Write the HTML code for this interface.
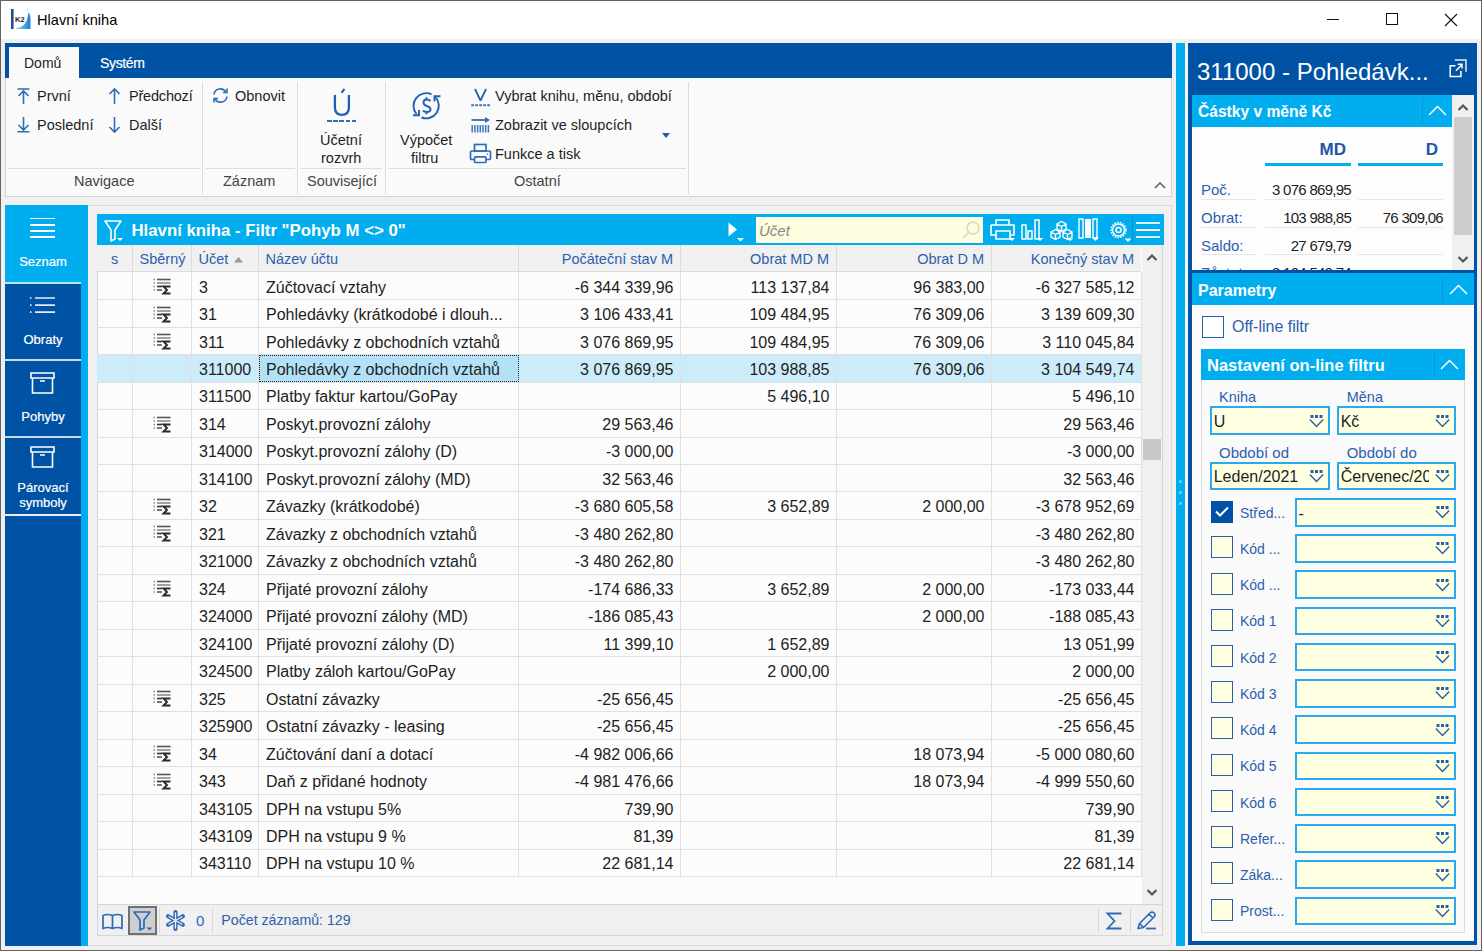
<!DOCTYPE html>
<html><head><meta charset="utf-8">
<style>
*{box-sizing:border-box;margin:0;padding:0}
html,body{width:1482px;height:951px;overflow:hidden}
body{position:relative;background:#f0f0f0;font-family:"Liberation Sans",sans-serif;color:#1e1e1e}
.a{position:absolute}
.t{position:absolute;white-space:nowrap;line-height:1}
svg{position:absolute;overflow:visible}
</style></head><body>
<!-- window frame -->
<div class="a" style="left:0;top:0;width:1482px;height:951px;border:1px solid #646464"></div>
<!-- title bar -->
<div class="a" style="left:1px;top:1px;width:1480px;height:38px;background:#fff"></div>
<svg style="left:10px;top:8px" width="22" height="22" viewBox="0 0 22 22"><defs><linearGradient id="g1" x1="0" y1="0" x2="1" y2="0"><stop offset="0" stop-color="#7fe3e6"/><stop offset="1" stop-color="#1f7ae0"/></linearGradient></defs><rect x="1" y="1" width="2.6" height="20" fill="#1f4e9c"/><path d="M6 20Q13 20 16.5 13Q18 9 18.5 4Q20.5 7 20.5 12V21H6Z" fill="url(#g1)"/><path d="M16 3L18 1" stroke="#9fd0f5" stroke-width="1"/><text x="5" y="13.5" font-family="Liberation Sans" font-weight="700" font-size="7.5" fill="#222">K2</text></svg>
<div class="t" style="left:37px;top:13px;font-size:14.6px;color:#000">Hlavní kniha</div>
<!-- window buttons -->
<div class="a" style="left:1327px;top:19px;width:12px;height:1px;background:#111"></div>
<div class="a" style="left:1386px;top:13px;width:12px;height:12px;border:1px solid #111"></div>
<svg style="left:1445px;top:14px" width="12" height="12"><path d="M0 0L12 12M12 0L0 12" stroke="#111" stroke-width="1.1"/></svg>


<!-- ribbon -->
<div class="a" style="left:5px;top:43px;width:1167px;height:35px;background:#0052a5"></div>
<div class="a" style="left:8.5px;top:46.5px;width:70px;height:31.5px;background:#fafafa"></div>
<div class="t" style="left:24px;top:55.5px;font-size:14px;color:#1e1e1e">Domů</div>
<div class="t" style="left:100px;top:55.5px;font-size:14px;color:#fff;letter-spacing:-0.35px;-webkit-text-stroke:0.2px #fff">Systém</div>
<div class="a" style="left:5px;top:78px;width:1167px;height:119px;background:#fafafa;border:1px solid #d4d4d4;border-top:none"></div>
<!-- group separators (horizontal) -->
<div class="a" style="left:8px;top:168px;width:192px;height:1px;background:#dcdcdc"></div>
<div class="a" style="left:206px;top:168px;width:89px;height:1px;background:#dcdcdc"></div>
<div class="a" style="left:301px;top:168px;width:81px;height:1px;background:#dcdcdc"></div>
<div class="a" style="left:389px;top:168px;width:297px;height:1px;background:#dcdcdc"></div>
<!-- group dividers -->
<div class="a" style="left:202px;top:82px;width:1px;height:112px;background:#dcdcdc"></div>
<div class="a" style="left:297px;top:82px;width:1px;height:112px;background:#dcdcdc"></div>
<div class="a" style="left:385px;top:82px;width:1px;height:112px;background:#dcdcdc"></div>
<div class="a" style="left:688px;top:82px;width:1px;height:112px;background:#dcdcdc"></div>
<!-- group labels -->
<div class="t" style="left:74px;top:174px;font-size:14.5px;color:#444">Navigace</div>
<div class="t" style="left:223px;top:174px;font-size:14.5px;color:#444">Záznam</div>
<div class="t" style="left:307px;top:174px;font-size:14.5px;color:#444">Související</div>
<div class="t" style="left:514px;top:174px;font-size:14.5px;color:#444">Ostatní</div>
<!-- nav buttons -->
<svg style="left:17px;top:88px" width="13" height="16" viewBox="0 0 13 16"><path d="M0.5 1H12.5M6.5 2.5V16M1.5 8L6.5 3L11.5 8" stroke="#2f6db5" stroke-width="1.6" fill="none"/></svg>
<div class="t" style="left:37px;top:89px;font-size:14.5px">První</div>
<svg style="left:17px;top:117px" width="13" height="16" viewBox="0 0 13 16"><path d="M0.5 14.8H12.5M6.5 0V13.5M1.5 8L6.5 13L11.5 8" stroke="#2f6db5" stroke-width="1.6" fill="none"/></svg>
<div class="t" style="left:37px;top:118px;font-size:14.5px">Poslední</div>
<svg style="left:108px;top:88px" width="13" height="16" viewBox="0 0 13 16"><path d="M6.5 1V16M1.5 6L6.5 1L11.5 6" stroke="#2f6db5" stroke-width="1.6" fill="none"/></svg>
<div class="t" style="left:129px;top:89px;font-size:14.5px;letter-spacing:-0.2px">Předchozí</div>
<svg style="left:108px;top:117px" width="13" height="16" viewBox="0 0 13 16"><path d="M6.5 0V15M1.5 10L6.5 15L11.5 10" stroke="#2f6db5" stroke-width="1.6" fill="none"/></svg>
<div class="t" style="left:129px;top:118px;font-size:14.5px">Další</div>
<!-- obnovit -->
<svg style="left:212px;top:87px" width="17" height="17" viewBox="0 0 17 17"><path d="M2 7.5A6.5 6.5 0 0 1 14 5M15 9.5A6.5 6.5 0 0 1 3 12" stroke="#2f6db5" stroke-width="1.6" fill="none"/><path d="M11 5.5H15V1.5M6 11.5H2V15.5" stroke="#2f6db5" stroke-width="1.6" fill="none"/></svg>
<div class="t" style="left:235px;top:89px;font-size:14.5px">Obnovit</div>
<!-- ucetni rozvrh -->
<svg style="left:332px;top:88px" width="20" height="29" viewBox="0 0 20 29"><path d="M2.9 7V19.5Q2.9 26.8 9.9 26.8Q16.9 26.8 16.9 19.5V7" stroke="#1f5fb0" stroke-width="2.3" fill="none"/><path d="M9.5 4.8L12.5 0.8" stroke="#1f5fb0" stroke-width="2" fill="none"/></svg>
<div class="a" style="left:327px;top:120px;width:30px;height:2.2px;background:repeating-linear-gradient(90deg,#2f6db5 0 4.5px,transparent 4.5px 6.2px)"></div>
<div class="t" style="left:320px;top:133px;font-size:14.5px">Účetní</div>
<div class="t" style="left:321px;top:151px;font-size:14.5px">rozvrh</div>
<!-- vypocet filtru -->
<svg style="left:405px;top:85px" width="45" height="40" viewBox="0 0 45 40"><g stroke="#1f62b3" stroke-width="1.9" fill="none"><path d="M26.5 9.3A12.7 12.7 0 0 0 11.5 29"/><path d="M8 30.3H14V25"/><path d="M16.5 32.5A12.7 12.7 0 0 0 30.2 11.8"/><path d="M29.5 16.5V11.2H35.5"/><path d="M25.5 16Q24 14.5 21.8 14.5Q18.5 14.5 18.5 17.5Q18.5 20 21.8 21Q25.5 22 25.5 24.5Q25.5 27 21.8 27Q19 27 17.8 25.5M21.5 12.3V14.5M21.5 27V29.3"/></g></svg>
<div class="t" style="left:400px;top:133px;font-size:14.5px">Výpočet</div>
<div class="t" style="left:411px;top:151px;font-size:14.5px">filtru</div>
<!-- ostatni small buttons -->
<svg style="left:470px;top:88px" width="21" height="19" viewBox="0 0 21 19"><path d="M5 1L10.5 12.6L16 1" stroke="#1f5fb0" stroke-width="1.8" fill="none" stroke-linejoin="bevel"/><path d="M1.2 17.2H20.5" stroke="#3a78c0" stroke-width="2" stroke-dasharray="2.8 1.2"/></svg>
<div class="t" style="left:495px;top:89px;font-size:14.5px">Vybrat knihu, měnu, období</div>
<svg style="left:471px;top:116px" width="20" height="17" viewBox="0 0 20 17"><path d="M0.5 4H15" stroke="#2f6db5" stroke-width="1.8"/><path d="M14 1L19 4L14 7Z" fill="#2f6db5"/><path d="M1.2 9V16.5M3.9 9V16.5M6.6 9V16.5M9.3 9V16.5M12 9V16.5M14.7 9V16.5M17.4 9V16.5" stroke="#3a78c0" stroke-width="1.5"/></svg>
<div class="t" style="left:495px;top:118px;font-size:14.5px">Zobrazit ve sloupcích</div>
<svg style="left:469px;top:143px" width="23" height="21" viewBox="0 0 23 21"><g stroke="#2f6db5" stroke-width="1.7" fill="none"><rect x="5.5" y="1.5" width="11.5" height="6.5"/><path d="M5.5 16.5H2.8Q1.5 16.5 1.5 15.2V9.3Q1.5 8 2.8 8H20.2Q21.5 8 21.5 9.3V15.2Q21.5 16.5 20.2 16.5H17"/><rect x="5.5" y="13.8" width="11.5" height="5.7" rx="1"/></g><circle cx="18.5" cy="11" r="0.7" fill="#2f6db5"/></svg>
<div class="t" style="left:495px;top:147px;font-size:14.5px">Funkce a tisk</div>
<svg style="left:662px;top:133px" width="8" height="5"><path d="M0 0H8L4 5Z" fill="#1f5fb0"/></svg>
<!-- collapse ribbon caret -->
<svg style="left:1154px;top:182px" width="12" height="7"><path d="M1 6L6 1L11 6" stroke="#555" stroke-width="1.4" fill="none"/></svg>


<!-- sidebar -->
<div class="a" style="left:5px;top:205px;width:83px;height:741px;background:#00adef"></div>
<div class="a" style="left:5px;top:284px;width:76px;height:662px;background:#0052a5"></div>
<div class="a" style="left:5px;top:282px;width:76px;height:2px;background:#b9e6fa"></div>
<div class="a" style="left:5px;top:359px;width:76px;height:2px;background:#c8d8ee"></div>
<div class="a" style="left:5px;top:436px;width:76px;height:2px;background:#c8d8ee"></div>
<div class="a" style="left:5px;top:514px;width:76px;height:2px;background:#e8eef8"></div>
<!-- seznam icon -->
<div class="a" style="left:30px;top:217.6px;width:25px;height:1.7px;background:#fff"></div>
<div class="a" style="left:30px;top:224px;width:25px;height:1.7px;background:#fff"></div>
<div class="a" style="left:30px;top:230.2px;width:25px;height:1.7px;background:#fff"></div>
<div class="a" style="left:30px;top:236.4px;width:25px;height:1.7px;background:#fff"></div>
<div class="t" style="left:5px;width:76px;text-align:center;top:255px;font-size:13px;color:#fff;-webkit-text-stroke:0.2px #fff">Seznam</div>
<!-- obraty icon -->
<svg style="left:30px;top:297px" width="25" height="18" viewBox="0 0 25 18"><path d="M0 1H1.5M0 8.2H1.5M0 15.2H1.5" stroke="#e8eef8" stroke-width="1.7"/><path d="M5 1H25M5 8.2H25M5 15.2H25" stroke="#e3ebf6" stroke-width="1.7"/></svg>
<div class="t" style="left:5px;width:76px;text-align:center;top:332.5px;font-size:13px;color:#fff;-webkit-text-stroke:0.2px #fff">Obraty</div>
<!-- pohyby icon -->
<svg style="left:30px;top:372px" width="25" height="22" viewBox="0 0 25 22"><path d="M1 1H24V6H1ZM2.5 6V21H22.5V6M10 9H15" stroke="#fff" stroke-width="1.6" fill="none"/></svg>
<div class="t" style="left:5px;width:76px;text-align:center;top:410px;font-size:13px;color:#fff;-webkit-text-stroke:0.2px #fff">Pohyby</div>
<svg style="left:30px;top:446px" width="25" height="22" viewBox="0 0 25 22"><path d="M1 1H24V6H1ZM2.5 6V21H22.5V6M10 9H15" stroke="#fff" stroke-width="1.6" fill="none"/></svg>
<div class="t" style="left:5px;width:76px;text-align:center;top:480.5px;font-size:13px;color:#fff;-webkit-text-stroke:0.2px #fff">Párovací</div>
<div class="t" style="left:5px;width:76px;text-align:center;top:496.3px;font-size:13px;color:#fff;-webkit-text-stroke:0.2px #fff">symboly</div>

<!-- table panel -->
<div class="a" style="left:88px;top:205px;width:1084px;height:741px;background:#f0f0f0;border:1px solid #d9d9d9;border-left:none"></div>
<div class="a" style="left:97px;top:214px;width:1067px;height:31px;background:#00adef"></div>
<svg style="left:104px;top:220px" width="20" height="22" viewBox="0 0 20 22"><path d="M1 1H17L11 10V19L7 21V10Z" stroke="#fff" stroke-width="1.6" fill="none" stroke-linejoin="round"/><path d="M13 18H19L16 21Z" fill="#fff"/></svg>
<div class="t" style="left:131.5px;top:223.2px;font-size:16.8px;font-weight:700;color:#fff">Hlavní kniha - Filtr "Pohyb M &lt;&gt; 0"</div>
<svg style="left:728px;top:222px" width="17" height="20"><path d="M0.5 0.5L9 7.5L0.5 14.5Z" fill="#fff"/><path d="M9 16H16L12.5 19.5Z" fill="#fff"/></svg>
<div class="a" style="left:756px;top:217px;width:227px;height:26px;background:#fdfde0"></div>
<div class="t" style="left:759px;top:223.3px;font-size:15px;font-style:italic;color:#888">Účet</div>
<svg style="left:962px;top:221px" width="18" height="18" viewBox="0 0 18 18"><circle cx="11" cy="7" r="6" stroke="#d8d8c8" stroke-width="1.5" fill="none"/><path d="M7 11L1 17" stroke="#d8d8c8" stroke-width="1.5"/></svg>
<div class="a" style="left:97px;top:245px;width:1045px;height:660px;background:#fcfcfc;border-left:1px solid #d6d6d6"></div>
<div class="a" style="left:97px;top:245px;width:1044px;height:27px;background:#f0f0f0;border-bottom:1px solid #dadada"></div>
<div class="t" style="left:97px;width:35px;text-align:center;top:252.23px;font-size:14.5px;color:#2c5fae">s</div>
<div class="t" style="left:139.5px;top:252.23px;font-size:14.5px;color:#2c5fae">Sběrný</div>
<div class="t" style="left:198.5px;top:252.23px;font-size:14.5px;color:#2c5fae">Účet</div>
<div class="t" style="left:265.5px;top:252.23px;font-size:14.5px;color:#2c5fae">Název účtu</div>
<div class="t" style="left:518px;width:155px;text-align:right;top:252.23px;font-size:14.5px;color:#2c5fae">Počáteční stav M</div>
<div class="t" style="left:680px;width:149px;text-align:right;top:252.23px;font-size:14.5px;color:#2c5fae">Obrat MD M</div>
<div class="t" style="left:836px;width:148px;text-align:right;top:252.23px;font-size:14.5px;color:#2c5fae">Obrat D M</div>
<div class="t" style="left:991px;width:143px;text-align:right;top:252.23px;font-size:14.5px;color:#2c5fae">Konečný stav M</div>
<svg style="left:233.5px;top:256.5px" width="9" height="5.5"><path d="M0 5.5L4.5 0L9 5.5Z" fill="#9a9a9a"/></svg>
<div class="a" style="left:132.0px;top:245px;width:1px;height:27px;background:#dadada"></div>
<div class="a" style="left:191.0px;top:245px;width:1px;height:27px;background:#dadada"></div>
<div class="a" style="left:258.0px;top:245px;width:1px;height:27px;background:#dadada"></div>
<div class="a" style="left:518.0px;top:245px;width:1px;height:27px;background:#dadada"></div>
<div class="a" style="left:680.0px;top:245px;width:1px;height:27px;background:#dadada"></div>
<div class="a" style="left:836.0px;top:245px;width:1px;height:27px;background:#dadada"></div>
<div class="a" style="left:991.0px;top:245px;width:1px;height:27px;background:#dadada"></div>
<div class="a" style="left:97px;top:299.2px;width:1044px;height:1px;background:#e0e0e0"></div>
<svg style="left:153px;top:278.2px" width="19" height="17" viewBox="0 0 19 17"><g stroke-width="1.6"><path d="M0.5 1.5H2M0.5 5H2M0.5 8.5H2M0.5 12H2" stroke="#888" stroke-width="1.4"/><path d="M4 1.5H17.5" stroke="#555"/><path d="M4 5H17.5" stroke="#8a8a8a"/><path d="M4 8.5H9" stroke="#333"/><path d="M4 12H9" stroke="#555"/></g><path d="M17.5 8.5H10.5L14 12L10.5 15.5H17.5" stroke="#2a2a2a" stroke-width="1.9" fill="none"/></svg>
<div class="t" style="left:199px;top:279.62px;font-size:16px">3</div>
<div class="t" style="left:266px;top:279.62px;font-size:16px">Zúčtovací vztahy</div>
<div class="t" style="left:518px;width:155.5px;text-align:right;top:279.62px;font-size:16px">-6 344 339,96</div>
<div class="t" style="left:680px;width:149.5px;text-align:right;top:279.62px;font-size:16px">113 137,84</div>
<div class="t" style="left:836px;width:148.5px;text-align:right;top:279.62px;font-size:16px">96 383,00</div>
<div class="t" style="left:991px;width:143.5px;text-align:right;top:279.62px;font-size:16px">-6 327 585,12</div>
<div class="a" style="left:97px;top:326.6px;width:1044px;height:1px;background:#e0e0e0"></div>
<svg style="left:153px;top:305.7px" width="19" height="17" viewBox="0 0 19 17"><g stroke-width="1.6"><path d="M0.5 1.5H2M0.5 5H2M0.5 8.5H2M0.5 12H2" stroke="#888" stroke-width="1.4"/><path d="M4 1.5H17.5" stroke="#555"/><path d="M4 5H17.5" stroke="#8a8a8a"/><path d="M4 8.5H9" stroke="#333"/><path d="M4 12H9" stroke="#555"/></g><path d="M17.5 8.5H10.5L14 12L10.5 15.5H17.5" stroke="#2a2a2a" stroke-width="1.9" fill="none"/></svg>
<div class="t" style="left:199px;top:307.09px;font-size:16px">31</div>
<div class="t" style="left:266px;top:307.09px;font-size:16px">Pohledávky (krátkodobé i dlouh...</div>
<div class="t" style="left:518px;width:155.5px;text-align:right;top:307.09px;font-size:16px">3 106 433,41</div>
<div class="t" style="left:680px;width:149.5px;text-align:right;top:307.09px;font-size:16px">109 484,95</div>
<div class="t" style="left:836px;width:148.5px;text-align:right;top:307.09px;font-size:16px">76 309,06</div>
<div class="t" style="left:991px;width:143.5px;text-align:right;top:307.09px;font-size:16px">3 139 609,30</div>
<div class="a" style="left:97px;top:354.1px;width:1044px;height:1px;background:#e0e0e0"></div>
<svg style="left:153px;top:333.1px" width="19" height="17" viewBox="0 0 19 17"><g stroke-width="1.6"><path d="M0.5 1.5H2M0.5 5H2M0.5 8.5H2M0.5 12H2" stroke="#888" stroke-width="1.4"/><path d="M4 1.5H17.5" stroke="#555"/><path d="M4 5H17.5" stroke="#8a8a8a"/><path d="M4 8.5H9" stroke="#333"/><path d="M4 12H9" stroke="#555"/></g><path d="M17.5 8.5H10.5L14 12L10.5 15.5H17.5" stroke="#2a2a2a" stroke-width="1.9" fill="none"/></svg>
<div class="t" style="left:199px;top:334.56px;font-size:16px">311</div>
<div class="t" style="left:266px;top:334.56px;font-size:16px">Pohledávky z obchodních vztahů</div>
<div class="t" style="left:518px;width:155.5px;text-align:right;top:334.56px;font-size:16px">3 076 869,95</div>
<div class="t" style="left:680px;width:149.5px;text-align:right;top:334.56px;font-size:16px">109 484,95</div>
<div class="t" style="left:836px;width:148.5px;text-align:right;top:334.56px;font-size:16px">76 309,06</div>
<div class="t" style="left:991px;width:143.5px;text-align:right;top:334.56px;font-size:16px">3 110 045,84</div>
<div class="a" style="left:97px;top:354.6px;width:1044px;height:27px;background:#cdecf9"></div>
<div class="a" style="left:97px;top:381.6px;width:1044px;height:1px;background:#e0e0e0"></div>
<div class="t" style="left:199px;top:362.02px;font-size:16px">311000</div>
<div class="t" style="left:266px;top:362.02px;font-size:16px">Pohledávky z obchodních vztahů</div>
<div class="t" style="left:518px;width:155.5px;text-align:right;top:362.02px;font-size:16px">3 076 869,95</div>
<div class="t" style="left:680px;width:149.5px;text-align:right;top:362.02px;font-size:16px">103 988,85</div>
<div class="t" style="left:836px;width:148.5px;text-align:right;top:362.02px;font-size:16px">76 309,06</div>
<div class="t" style="left:991px;width:143.5px;text-align:right;top:362.02px;font-size:16px">3 104 549,74</div>
<div class="a" style="left:97px;top:409.0px;width:1044px;height:1px;background:#e0e0e0"></div>
<div class="t" style="left:199px;top:389.49px;font-size:16px">311500</div>
<div class="t" style="left:266px;top:389.49px;font-size:16px">Platby faktur kartou/GoPay</div>
<div class="t" style="left:680px;width:149.5px;text-align:right;top:389.49px;font-size:16px">5 496,10</div>
<div class="t" style="left:991px;width:143.5px;text-align:right;top:389.49px;font-size:16px">5 496,10</div>
<div class="a" style="left:97px;top:436.5px;width:1044px;height:1px;background:#e0e0e0"></div>
<svg style="left:153px;top:415.5px" width="19" height="17" viewBox="0 0 19 17"><g stroke-width="1.6"><path d="M0.5 1.5H2M0.5 5H2M0.5 8.5H2M0.5 12H2" stroke="#888" stroke-width="1.4"/><path d="M4 1.5H17.5" stroke="#555"/><path d="M4 5H17.5" stroke="#8a8a8a"/><path d="M4 8.5H9" stroke="#333"/><path d="M4 12H9" stroke="#555"/></g><path d="M17.5 8.5H10.5L14 12L10.5 15.5H17.5" stroke="#2a2a2a" stroke-width="1.9" fill="none"/></svg>
<div class="t" style="left:199px;top:416.96px;font-size:16px">314</div>
<div class="t" style="left:266px;top:416.96px;font-size:16px">Poskyt.provozní zálohy</div>
<div class="t" style="left:518px;width:155.5px;text-align:right;top:416.96px;font-size:16px">29 563,46</div>
<div class="t" style="left:991px;width:143.5px;text-align:right;top:416.96px;font-size:16px">29 563,46</div>
<div class="a" style="left:97px;top:464.0px;width:1044px;height:1px;background:#e0e0e0"></div>
<div class="t" style="left:199px;top:444.42px;font-size:16px">314000</div>
<div class="t" style="left:266px;top:444.42px;font-size:16px">Poskyt.provozní zálohy (D)</div>
<div class="t" style="left:518px;width:155.5px;text-align:right;top:444.42px;font-size:16px">-3 000,00</div>
<div class="t" style="left:991px;width:143.5px;text-align:right;top:444.42px;font-size:16px">-3 000,00</div>
<div class="a" style="left:97px;top:491.4px;width:1044px;height:1px;background:#e0e0e0"></div>
<div class="t" style="left:199px;top:471.89px;font-size:16px">314100</div>
<div class="t" style="left:266px;top:471.89px;font-size:16px">Poskyt.provozní zálohy (MD)</div>
<div class="t" style="left:518px;width:155.5px;text-align:right;top:471.89px;font-size:16px">32 563,46</div>
<div class="t" style="left:991px;width:143.5px;text-align:right;top:471.89px;font-size:16px">32 563,46</div>
<div class="a" style="left:97px;top:518.9px;width:1044px;height:1px;background:#e0e0e0"></div>
<svg style="left:153px;top:497.9px" width="19" height="17" viewBox="0 0 19 17"><g stroke-width="1.6"><path d="M0.5 1.5H2M0.5 5H2M0.5 8.5H2M0.5 12H2" stroke="#888" stroke-width="1.4"/><path d="M4 1.5H17.5" stroke="#555"/><path d="M4 5H17.5" stroke="#8a8a8a"/><path d="M4 8.5H9" stroke="#333"/><path d="M4 12H9" stroke="#555"/></g><path d="M17.5 8.5H10.5L14 12L10.5 15.5H17.5" stroke="#2a2a2a" stroke-width="1.9" fill="none"/></svg>
<div class="t" style="left:199px;top:499.36px;font-size:16px">32</div>
<div class="t" style="left:266px;top:499.36px;font-size:16px">Závazky (krátkodobé)</div>
<div class="t" style="left:518px;width:155.5px;text-align:right;top:499.36px;font-size:16px">-3 680 605,58</div>
<div class="t" style="left:680px;width:149.5px;text-align:right;top:499.36px;font-size:16px">3 652,89</div>
<div class="t" style="left:836px;width:148.5px;text-align:right;top:499.36px;font-size:16px">2 000,00</div>
<div class="t" style="left:991px;width:143.5px;text-align:right;top:499.36px;font-size:16px">-3 678 952,69</div>
<div class="a" style="left:97px;top:546.4px;width:1044px;height:1px;background:#e0e0e0"></div>
<svg style="left:153px;top:525.4px" width="19" height="17" viewBox="0 0 19 17"><g stroke-width="1.6"><path d="M0.5 1.5H2M0.5 5H2M0.5 8.5H2M0.5 12H2" stroke="#888" stroke-width="1.4"/><path d="M4 1.5H17.5" stroke="#555"/><path d="M4 5H17.5" stroke="#8a8a8a"/><path d="M4 8.5H9" stroke="#333"/><path d="M4 12H9" stroke="#555"/></g><path d="M17.5 8.5H10.5L14 12L10.5 15.5H17.5" stroke="#2a2a2a" stroke-width="1.9" fill="none"/></svg>
<div class="t" style="left:199px;top:526.83px;font-size:16px">321</div>
<div class="t" style="left:266px;top:526.83px;font-size:16px">Závazky z obchodních vztahů</div>
<div class="t" style="left:518px;width:155.5px;text-align:right;top:526.83px;font-size:16px">-3 480 262,80</div>
<div class="t" style="left:991px;width:143.5px;text-align:right;top:526.83px;font-size:16px">-3 480 262,80</div>
<div class="a" style="left:97px;top:573.8px;width:1044px;height:1px;background:#e0e0e0"></div>
<div class="t" style="left:199px;top:554.29px;font-size:16px">321000</div>
<div class="t" style="left:266px;top:554.29px;font-size:16px">Závazky z obchodních vztahů</div>
<div class="t" style="left:518px;width:155.5px;text-align:right;top:554.29px;font-size:16px">-3 480 262,80</div>
<div class="t" style="left:991px;width:143.5px;text-align:right;top:554.29px;font-size:16px">-3 480 262,80</div>
<div class="a" style="left:97px;top:601.3px;width:1044px;height:1px;background:#e0e0e0"></div>
<svg style="left:153px;top:580.3px" width="19" height="17" viewBox="0 0 19 17"><g stroke-width="1.6"><path d="M0.5 1.5H2M0.5 5H2M0.5 8.5H2M0.5 12H2" stroke="#888" stroke-width="1.4"/><path d="M4 1.5H17.5" stroke="#555"/><path d="M4 5H17.5" stroke="#8a8a8a"/><path d="M4 8.5H9" stroke="#333"/><path d="M4 12H9" stroke="#555"/></g><path d="M17.5 8.5H10.5L14 12L10.5 15.5H17.5" stroke="#2a2a2a" stroke-width="1.9" fill="none"/></svg>
<div class="t" style="left:199px;top:581.76px;font-size:16px">324</div>
<div class="t" style="left:266px;top:581.76px;font-size:16px">Přijaté provozní zálohy</div>
<div class="t" style="left:518px;width:155.5px;text-align:right;top:581.76px;font-size:16px">-174 686,33</div>
<div class="t" style="left:680px;width:149.5px;text-align:right;top:581.76px;font-size:16px">3 652,89</div>
<div class="t" style="left:836px;width:148.5px;text-align:right;top:581.76px;font-size:16px">2 000,00</div>
<div class="t" style="left:991px;width:143.5px;text-align:right;top:581.76px;font-size:16px">-173 033,44</div>
<div class="a" style="left:97px;top:628.8px;width:1044px;height:1px;background:#e0e0e0"></div>
<div class="t" style="left:199px;top:609.23px;font-size:16px">324000</div>
<div class="t" style="left:266px;top:609.23px;font-size:16px">Přijaté provozní zálohy (MD)</div>
<div class="t" style="left:518px;width:155.5px;text-align:right;top:609.23px;font-size:16px">-186 085,43</div>
<div class="t" style="left:836px;width:148.5px;text-align:right;top:609.23px;font-size:16px">2 000,00</div>
<div class="t" style="left:991px;width:143.5px;text-align:right;top:609.23px;font-size:16px">-188 085,43</div>
<div class="a" style="left:97px;top:656.2px;width:1044px;height:1px;background:#e0e0e0"></div>
<div class="t" style="left:199px;top:636.69px;font-size:16px">324100</div>
<div class="t" style="left:266px;top:636.69px;font-size:16px">Přijaté provozní zálohy (D)</div>
<div class="t" style="left:518px;width:155.5px;text-align:right;top:636.69px;font-size:16px">11 399,10</div>
<div class="t" style="left:680px;width:149.5px;text-align:right;top:636.69px;font-size:16px">1 652,89</div>
<div class="t" style="left:991px;width:143.5px;text-align:right;top:636.69px;font-size:16px">13 051,99</div>
<div class="a" style="left:97px;top:683.7px;width:1044px;height:1px;background:#e0e0e0"></div>
<div class="t" style="left:199px;top:664.16px;font-size:16px">324500</div>
<div class="t" style="left:266px;top:664.16px;font-size:16px">Platby záloh kartou/GoPay</div>
<div class="t" style="left:680px;width:149.5px;text-align:right;top:664.16px;font-size:16px">2 000,00</div>
<div class="t" style="left:991px;width:143.5px;text-align:right;top:664.16px;font-size:16px">2 000,00</div>
<div class="a" style="left:97px;top:711.2px;width:1044px;height:1px;background:#e0e0e0"></div>
<svg style="left:153px;top:690.2px" width="19" height="17" viewBox="0 0 19 17"><g stroke-width="1.6"><path d="M0.5 1.5H2M0.5 5H2M0.5 8.5H2M0.5 12H2" stroke="#888" stroke-width="1.4"/><path d="M4 1.5H17.5" stroke="#555"/><path d="M4 5H17.5" stroke="#8a8a8a"/><path d="M4 8.5H9" stroke="#333"/><path d="M4 12H9" stroke="#555"/></g><path d="M17.5 8.5H10.5L14 12L10.5 15.5H17.5" stroke="#2a2a2a" stroke-width="1.9" fill="none"/></svg>
<div class="t" style="left:199px;top:691.63px;font-size:16px">325</div>
<div class="t" style="left:266px;top:691.63px;font-size:16px">Ostatní závazky</div>
<div class="t" style="left:518px;width:155.5px;text-align:right;top:691.63px;font-size:16px">-25 656,45</div>
<div class="t" style="left:991px;width:143.5px;text-align:right;top:691.63px;font-size:16px">-25 656,45</div>
<div class="a" style="left:97px;top:738.6px;width:1044px;height:1px;background:#e0e0e0"></div>
<div class="t" style="left:199px;top:719.10px;font-size:16px">325900</div>
<div class="t" style="left:266px;top:719.10px;font-size:16px">Ostatní závazky - leasing</div>
<div class="t" style="left:518px;width:155.5px;text-align:right;top:719.10px;font-size:16px">-25 656,45</div>
<div class="t" style="left:991px;width:143.5px;text-align:right;top:719.10px;font-size:16px">-25 656,45</div>
<div class="a" style="left:97px;top:766.1px;width:1044px;height:1px;background:#e0e0e0"></div>
<svg style="left:153px;top:745.1px" width="19" height="17" viewBox="0 0 19 17"><g stroke-width="1.6"><path d="M0.5 1.5H2M0.5 5H2M0.5 8.5H2M0.5 12H2" stroke="#888" stroke-width="1.4"/><path d="M4 1.5H17.5" stroke="#555"/><path d="M4 5H17.5" stroke="#8a8a8a"/><path d="M4 8.5H9" stroke="#333"/><path d="M4 12H9" stroke="#555"/></g><path d="M17.5 8.5H10.5L14 12L10.5 15.5H17.5" stroke="#2a2a2a" stroke-width="1.9" fill="none"/></svg>
<div class="t" style="left:199px;top:746.56px;font-size:16px">34</div>
<div class="t" style="left:266px;top:746.56px;font-size:16px">Zúčtování daní a dotací</div>
<div class="t" style="left:518px;width:155.5px;text-align:right;top:746.56px;font-size:16px">-4 982 006,66</div>
<div class="t" style="left:836px;width:148.5px;text-align:right;top:746.56px;font-size:16px">18 073,94</div>
<div class="t" style="left:991px;width:143.5px;text-align:right;top:746.56px;font-size:16px">-5 000 080,60</div>
<div class="a" style="left:97px;top:793.6px;width:1044px;height:1px;background:#e0e0e0"></div>
<svg style="left:153px;top:772.6px" width="19" height="17" viewBox="0 0 19 17"><g stroke-width="1.6"><path d="M0.5 1.5H2M0.5 5H2M0.5 8.5H2M0.5 12H2" stroke="#888" stroke-width="1.4"/><path d="M4 1.5H17.5" stroke="#555"/><path d="M4 5H17.5" stroke="#8a8a8a"/><path d="M4 8.5H9" stroke="#333"/><path d="M4 12H9" stroke="#555"/></g><path d="M17.5 8.5H10.5L14 12L10.5 15.5H17.5" stroke="#2a2a2a" stroke-width="1.9" fill="none"/></svg>
<div class="t" style="left:199px;top:774.03px;font-size:16px">343</div>
<div class="t" style="left:266px;top:774.03px;font-size:16px">Daň z přidané hodnoty</div>
<div class="t" style="left:518px;width:155.5px;text-align:right;top:774.03px;font-size:16px">-4 981 476,66</div>
<div class="t" style="left:836px;width:148.5px;text-align:right;top:774.03px;font-size:16px">18 073,94</div>
<div class="t" style="left:991px;width:143.5px;text-align:right;top:774.03px;font-size:16px">-4 999 550,60</div>
<div class="a" style="left:97px;top:821.0px;width:1044px;height:1px;background:#e0e0e0"></div>
<div class="t" style="left:199px;top:801.50px;font-size:16px">343105</div>
<div class="t" style="left:266px;top:801.50px;font-size:16px">DPH na vstupu 5%</div>
<div class="t" style="left:518px;width:155.5px;text-align:right;top:801.50px;font-size:16px">739,90</div>
<div class="t" style="left:991px;width:143.5px;text-align:right;top:801.50px;font-size:16px">739,90</div>
<div class="a" style="left:97px;top:848.5px;width:1044px;height:1px;background:#e0e0e0"></div>
<div class="t" style="left:199px;top:828.96px;font-size:16px">343109</div>
<div class="t" style="left:266px;top:828.96px;font-size:16px">DPH na vstupu 9 %</div>
<div class="t" style="left:518px;width:155.5px;text-align:right;top:828.96px;font-size:16px">81,39</div>
<div class="t" style="left:991px;width:143.5px;text-align:right;top:828.96px;font-size:16px">81,39</div>
<div class="a" style="left:97px;top:876.0px;width:1044px;height:1px;background:#e0e0e0"></div>
<div class="t" style="left:199px;top:856.43px;font-size:16px">343110</div>
<div class="t" style="left:266px;top:856.43px;font-size:16px">DPH na vstupu 10 %</div>
<div class="t" style="left:518px;width:155.5px;text-align:right;top:856.43px;font-size:16px">22 681,14</div>
<div class="t" style="left:991px;width:143.5px;text-align:right;top:856.43px;font-size:16px">22 681,14</div>
<div class="a" style="left:132.0px;top:272px;width:1px;height:605.0px;background:#e0e0e0"></div>
<div class="a" style="left:191.0px;top:272px;width:1px;height:605.0px;background:#e0e0e0"></div>
<div class="a" style="left:258.0px;top:272px;width:1px;height:605.0px;background:#e0e0e0"></div>
<div class="a" style="left:518.0px;top:272px;width:1px;height:605.0px;background:#e0e0e0"></div>
<div class="a" style="left:680.0px;top:272px;width:1px;height:605.0px;background:#e0e0e0"></div>
<div class="a" style="left:836.0px;top:272px;width:1px;height:605.0px;background:#e0e0e0"></div>
<div class="a" style="left:991.0px;top:272px;width:1px;height:605.0px;background:#e0e0e0"></div>
<div class="a" style="left:1141.0px;top:272px;width:1px;height:605.0px;background:#e0e0e0"></div>
<div class="a" style="left:259px;top:355.1px;width:260px;height:27px;background:#b3e2f8;border:1px dotted #222"></div>
<div class="t" style="left:266px;top:362.06px;font-size:16px">Pohledávky z obchodních vztahů</div>
<!-- scrollbar -->
<div class="a" style="left:1142px;top:245px;width:21px;height:659px;background:#f0f0f0;border-right:1px solid #d6d6d6"></div>
<svg style="left:1146px;top:253px" width="12" height="8"><path d="M1.5 7L6 2.5L10.5 7" stroke="#555" stroke-width="2.2" fill="none"/></svg>
<div class="a" style="left:1143px;top:439px;width:18px;height:21px;background:#c8c8c8"></div>
<svg style="left:1146px;top:889px" width="12" height="8"><path d="M1.5 1L6 5.5L10.5 1" stroke="#555" stroke-width="2.2" fill="none"/></svg>
<!-- footer -->
<div class="a" style="left:97px;top:904px;width:1066px;height:32px;background:#f0f0f0;border-top:1px solid #d6d6d6;border-bottom:1px solid #d6d6d6;border-right:1px solid #d6d6d6;border-left:1px solid #d6d6d6"></div>


<!-- footer contents -->
<svg style="left:102px;top:913px" width="21" height="17" viewBox="0 0 21 17"><path d="M1 2.5Q5.5 0.5 10.5 2.5Q15.5 0.5 20 2.5V15.5Q15.5 13.5 10.5 15.5Q5.5 13.5 1 15.5ZM10.5 2.5V15.5" stroke="#2a6ab8" stroke-width="1.7" fill="none" stroke-linejoin="round"/></svg>
<div class="a" style="left:128px;top:906px;width:29px;height:29px;background:#cfcfcf;border:2px solid #707070"></div>
<svg style="left:133px;top:911px" width="21" height="20" viewBox="0 0 21 20"><path d="M1 1H17L11 9V17L7 19V9Z" stroke="#2a6ab8" stroke-width="1.7" fill="none" stroke-linejoin="round"/><path d="M13.5 16.5H19.5L16.5 19.5Z" fill="#2a6ab8"/></svg>
<div class="a" style="left:159px;top:908px;width:1px;height:25px;background:#d8d8d8"></div>
<svg style="left:165px;top:910px" width="21" height="21" viewBox="0 0 21 21"><g stroke-linecap="round"><path d="M10.5 2V19M3.14 6.25L17.86 14.75M3.14 14.75L17.86 6.25" stroke="#2a6ab8" stroke-width="4.2"/><path d="M10.5 3V18M4 6.75L17 14.25M4 14.25L17 6.75" stroke="#f0f0f0" stroke-width="1.3"/></g></svg>
<div class="t" style="left:196px;top:912.7px;font-size:15px;color:#2a6ab8">0</div>
<div class="a" style="left:212px;top:908px;width:1px;height:25px;background:#d8d8d8"></div>
<div class="t" style="left:221.3px;top:913.3px;font-size:14.2px;color:#2c5fae">Počet záznamů: 129</div>
<div class="a" style="left:1097.5px;top:908px;width:1px;height:25px;background:#d8d8d8"></div>
<div class="a" style="left:1130px;top:908px;width:1px;height:25px;background:#d8d8d8"></div>
<svg style="left:1106px;top:912px" width="17" height="18" viewBox="0 0 17 18"><path d="M15.5 1.5H1.5L8.5 9L1.5 16.5H15.5" stroke="#2a6ab8" stroke-width="1.8" fill="none" stroke-linejoin="miter"/></svg>
<svg style="left:1137px;top:911px" width="20" height="19" viewBox="0 0 20 19"><path d="M1 17.5L2.5 12.5L13.5 1.5Q15 0.5 16.5 1.5L17.5 2.5Q18.5 4 17.5 5.5L6.5 16.5ZM2.5 12.5L6.5 16.5M12 3L16 7" stroke="#2a6ab8" stroke-width="1.6" fill="none" stroke-linejoin="round"/><path d="M9 17.5H19" stroke="#2a6ab8" stroke-width="1.8"/></svg>
<!-- table toolbar icons -->
<svg style="left:990px;top:219px" width="26" height="22" viewBox="0 0 26 22"><g stroke="#fff" stroke-width="1.6" fill="none"><path d="M6 6V1H19V6M1 6H24V16H20M6 16H1V6M6 12H20V20H6Z"/></g><path d="M19 19H25L22 22Z" fill="#fff"/></svg>
<svg style="left:1021px;top:219px" width="24" height="22" viewBox="0 0 24 22"><g stroke="#fff" stroke-width="1.5" fill="none"><path d="M1 6H5V20H1ZM7 12H11V20H7ZM14 1H18V20H14Z"/></g><path d="M15.5 19H22.5L19 22Z" fill="#fff"/></svg>
<svg style="left:1050px;top:219px" width="24" height="22" viewBox="0 0 24 22"><g stroke="#fff" stroke-width="1.4" fill="none"><path d="M7 5L11.5 2.5L16 5V10L11.5 12.5L7 10ZM7 5L11.5 7.5L16 5M11.5 7.5V12.5"/><path d="M1 13L5.5 10.5L10 13V18L5.5 20.5L1 18ZM1 13L5.5 15.5L10 13M5.5 15.5V20.5"/><path d="M13 13L17.5 10.5L22 13V18L17.5 20.5L13 18ZM13 13L17.5 15.5L22 13M17.5 15.5V20.5"/></g><path d="M17 19.5H23.5L20.2 22Z" fill="#fff"/></svg>
<svg style="left:1078px;top:218px" width="24" height="23" viewBox="0 0 24 23"><g stroke="#fff" stroke-width="1.4" fill="none"><path d="M1 1H5V20H1ZM15 1H19V20H15Z"/></g><path d="M7 1H13V20H7Z" fill="#fff"/><path d="M14 19.5H21L17.5 23Z" fill="#fff"/></svg>
<svg style="left:1108px;top:220px" width="25" height="22" viewBox="0 0 25 22"><g stroke="#fff" fill="none"><circle cx="10.5" cy="10" r="7.5" stroke-width="1.5" stroke-dasharray="1.6 1.2"/><circle cx="10.5" cy="10" r="6" stroke-width="1.5"/><circle cx="10.5" cy="10" r="2.5" stroke-width="1.5"/></g><path d="M16.5 18.5H23.5L20 22Z" fill="#fff"/></svg>
<div class="a" style="left:1132px;top:217px;width:1px;height:25px;background:#0a8cc8"></div>
<div class="a" style="left:1136px;top:222px;width:24px;height:2px;background:#fff;opacity:.85"></div>
<div class="a" style="left:1136px;top:229px;width:24px;height:1.5px;background:#fff"></div>
<div class="a" style="left:1136px;top:235.5px;width:24px;height:2px;background:#fff;opacity:.85"></div>

<!-- right panel -->
<div class="a" style="left:1176px;top:43px;width:9px;height:903px;background:#00adef"></div>
<div class="a" style="left:1179px;top:479.5px;width:3px;height:3px;border-radius:50%;background:#6fd0f7"></div>
<div class="a" style="left:1179px;top:491px;width:3px;height:3px;border-radius:50%;background:#6fd0f7"></div>
<div class="a" style="left:1179px;top:502px;width:3px;height:3px;border-radius:50%;background:#6fd0f7"></div>
<div class="a" style="left:1185px;top:43px;width:3px;height:903px;background:#f5f3f3"></div>
<div class="a" style="left:1188px;top:43px;width:289px;height:902px;background:#0052a5"></div>
<div class="t" style="left:1197px;top:59.7px;font-size:24px;color:#fff">311000 - Pohledávk...</div>
<svg style="left:1449px;top:59px" width="19" height="19" viewBox="0 0 19 19"><g stroke="#fff" stroke-width="1.5" fill="none"><path d="M6.5 6.8H1.2V17.6H11.9V11.8"/><path d="M5.8 1.1H17V12.7" opacity="0.9"/><path d="M6.9 11.8L13 5.5M8.7 5.3H13V9.5"/></g></svg>
<div class="a" style="left:1192px;top:95px;width:260px;height:32px;background:#00adef"></div>
<div class="t" style="left:1198px;top:103.8px;font-size:15.6px;font-weight:700;color:#fff">Částky v měně Kč</div>
<div class="a" style="left:1422px;top:98px;width:1px;height:26px;background:#0a96d6"></div>
<svg style="left:1428px;top:105px" width="19" height="11"><path d="M1 10L9.5 1.5L18 10" stroke="#fff" stroke-width="1.5" fill="none"/></svg>
<div class="a" style="left:1192px;top:127px;width:260px;height:143px;background:#fdfdfd"></div>
<div class="a" style="left:1452px;top:95px;width:22px;height:175px;background:#f0f0f0"></div>
<svg style="left:1457px;top:103px" width="12" height="8"><path d="M1.5 7L6 2.5L10.5 7" stroke="#555" stroke-width="2.2" fill="none"/></svg>
<div class="a" style="left:1454px;top:117px;width:18px;height:118px;background:#cdcdcd"></div>
<svg style="left:1457px;top:256px" width="12" height="8"><path d="M1.5 1L6 5.5L10.5 1" stroke="#555" stroke-width="2.2" fill="none"/></svg>
<div class="t" style="left:1265px;width:81px;text-align:right;top:141px;font-size:17px;font-weight:700;color:#1f55a6">MD</div>
<div class="t" style="left:1358px;width:80px;text-align:right;top:141px;font-size:17px;font-weight:700;color:#1f55a6">D</div>
<div class="a" style="left:1265px;top:163px;width:86px;height:3px;background:#00adef"></div>
<div class="a" style="left:1358px;top:163px;width:85px;height:3px;background:#00adef"></div>
<div class="a" style="left:1192px;top:127px;width:260px;height:143px;overflow:hidden">
<div class="t" style="left:9px;top:55.3px;font-size:15px;color:#2c5fae">Poč.</div>
<div class="t" style="left:73px;width:86px;text-align:right;top:55.3px;font-size:15px;letter-spacing:-0.72px;color:#1e1e1e">3 076 869,95</div>
<div class="a" style="left:9px;top:72.0px;width:56px;height:1px;background:#e6e6e6"></div>
<div class="a" style="left:73px;top:72.0px;width:86px;height:1px;background:#e6e6e6"></div>
<div class="a" style="left:166px;top:72.0px;width:85px;height:1px;background:#e6e6e6"></div>
<div class="t" style="left:9px;top:82.9px;font-size:15px;color:#2c5fae">Obrat:</div>
<div class="t" style="left:73px;width:86px;text-align:right;top:82.9px;font-size:15px;letter-spacing:-0.72px;color:#1e1e1e">103 988,85</div>
<div class="t" style="left:166px;width:85px;text-align:right;top:82.9px;font-size:15px;letter-spacing:-0.72px;color:#1e1e1e">76 309,06</div>
<div class="a" style="left:9px;top:99.6px;width:56px;height:1px;background:#e6e6e6"></div>
<div class="a" style="left:73px;top:99.6px;width:86px;height:1px;background:#e6e6e6"></div>
<div class="a" style="left:166px;top:99.6px;width:85px;height:1px;background:#e6e6e6"></div>
<div class="t" style="left:9px;top:110.5px;font-size:15px;color:#2c5fae">Saldo:</div>
<div class="t" style="left:73px;width:86px;text-align:right;top:110.5px;font-size:15px;letter-spacing:-0.72px;color:#1e1e1e">27 679,79</div>
<div class="a" style="left:9px;top:127.2px;width:56px;height:1px;background:#e6e6e6"></div>
<div class="a" style="left:73px;top:127.2px;width:86px;height:1px;background:#e6e6e6"></div>
<div class="a" style="left:166px;top:127.2px;width:85px;height:1px;background:#e6e6e6"></div>
<div class="t" style="left:9px;top:138.1px;font-size:15px;color:#2c5fae">Zůstat.</div>
<div class="t" style="left:73px;width:86px;text-align:right;top:138.1px;font-size:15px;letter-spacing:-0.72px;color:#1e1e1e">3 104 549,74</div>
</div>
<div class="a" style="left:1192px;top:273px;width:282px;height:32px;background:#00adef"></div>
<div class="t" style="left:1198px;top:282.6px;font-size:16px;font-weight:700;color:#fff">Parametry</div>
<div class="a" style="left:1442px;top:277px;width:1px;height:25px;background:#0a96d6"></div>
<svg style="left:1449px;top:284px" width="19" height="11"><path d="M1 10L9.5 1.5L18 10" stroke="#fff" stroke-width="1.5" fill="none"/></svg>
<div class="a" style="left:1192px;top:305px;width:282px;height:636px;background:#fbfbfb"></div>
<div class="a" style="left:1202px;top:316px;width:22px;height:22px;border:1.5px solid #2a5ea8;background:#fff"></div>
<div class="t" style="left:1232px;top:319.3px;font-size:16px;color:#2c5fae">Off-line filtr</div>
<div class="a" style="left:1201px;top:349px;width:264px;height:31px;background:#00adef"></div>
<div class="t" style="left:1207px;top:357px;font-size:16.5px;font-weight:700;color:#fff">Nastavení on-line filtru</div>
<div class="a" style="left:1434px;top:352px;width:1px;height:25px;background:#0a96d6"></div>
<svg style="left:1440px;top:359px" width="19" height="11"><path d="M1 10L9.5 1.5L18 10" stroke="#fff" stroke-width="1.5" fill="none"/></svg>
<div class="a" style="left:1201px;top:380px;width:264px;height:553px;background:#fafafa;border:1px solid #dcdcdc;border-top:none"></div>
<div class="t" style="left:1219px;top:389.7px;font-size:14.5px;color:#2c5fae">Kniha</div>
<div class="t" style="left:1346.7px;top:389.7px;font-size:14.5px;color:#2c5fae">Měna</div>
<div class="a" style="left:1210px;top:406.4px;width:120px;height:28.5px;background:#ffffe1;border:2px solid #2aa9ec"></div><div class="a" style="left:1212px;top:408.4px;width:91px;height:24.5px;overflow:hidden"><div class="t" style="left:1.7px;top:5.8px;font-size:16px;color:#1e1e1e">U</div></div><svg style="left:1308.5px;top:414.6px" width="15" height="13" viewBox="0 0 15 13"><g fill="#2a5ea8"><rect x="1.5" y="0" width="3" height="3"/><rect x="6" y="0" width="3" height="3"/><rect x="10.5" y="0" width="3" height="3"/></g><path d="M0.8 4.5L7.5 11.5L14.2 4.5" stroke="#2a5ea8" stroke-width="1.4" fill="none"/></svg>
<div class="a" style="left:1337px;top:406.4px;width:119px;height:28.5px;background:#ffffe1;border:2px solid #2aa9ec"></div><div class="a" style="left:1339px;top:408.4px;width:90px;height:24.5px;overflow:hidden"><div class="t" style="left:1.7px;top:5.8px;font-size:16px;color:#1e1e1e">Kč</div></div><svg style="left:1434.5px;top:414.6px" width="15" height="13" viewBox="0 0 15 13"><g fill="#2a5ea8"><rect x="1.5" y="0" width="3" height="3"/><rect x="6" y="0" width="3" height="3"/><rect x="10.5" y="0" width="3" height="3"/></g><path d="M0.8 4.5L7.5 11.5L14.2 4.5" stroke="#2a5ea8" stroke-width="1.4" fill="none"/></svg>
<div class="t" style="left:1219px;top:444.7px;font-size:15px;color:#2c5fae">Období od</div>
<div class="t" style="left:1346.7px;top:444.7px;font-size:15px;color:#2c5fae">Období do</div>
<div class="a" style="left:1210px;top:461.6px;width:120px;height:28.5px;background:#ffffe1;border:2px solid #2aa9ec"></div><div class="a" style="left:1212px;top:463.6px;width:91px;height:24.5px;overflow:hidden"><div class="t" style="left:1.7px;top:5.8px;font-size:16px;color:#1e1e1e">Leden/2021</div></div><svg style="left:1308.5px;top:469.8px" width="15" height="13" viewBox="0 0 15 13"><g fill="#2a5ea8"><rect x="1.5" y="0" width="3" height="3"/><rect x="6" y="0" width="3" height="3"/><rect x="10.5" y="0" width="3" height="3"/></g><path d="M0.8 4.5L7.5 11.5L14.2 4.5" stroke="#2a5ea8" stroke-width="1.4" fill="none"/></svg>
<div class="a" style="left:1337px;top:461.6px;width:119px;height:28.5px;background:#ffffe1;border:2px solid #2aa9ec"></div><div class="a" style="left:1339px;top:463.6px;width:90px;height:24.5px;overflow:hidden"><div class="t" style="left:1.7px;top:5.8px;font-size:16px;color:#1e1e1e">Červenec/2021</div></div><svg style="left:1434.5px;top:469.8px" width="15" height="13" viewBox="0 0 15 13"><g fill="#2a5ea8"><rect x="1.5" y="0" width="3" height="3"/><rect x="6" y="0" width="3" height="3"/><rect x="10.5" y="0" width="3" height="3"/></g><path d="M0.8 4.5L7.5 11.5L14.2 4.5" stroke="#2a5ea8" stroke-width="1.4" fill="none"/></svg>
<div class="a" style="left:1211px;top:501.0px;width:21.5px;height:21.5px;background:#0052a5"></div>
<svg style="left:1214px;top:505.0px" width="16" height="13"><path d="M2 6.5L6 10.5L14 2.5" stroke="#fff" stroke-width="2" fill="none"/></svg>
<div class="a" style="left:1294.7px;top:498.0px;width:161.3px;height:28.5px;background:#ffffe1;border:2px solid #2aa9ec"></div><div class="a" style="left:1296.7px;top:500.0px;width:132.3px;height:24.5px;overflow:hidden"><div class="t" style="left:1.7px;top:5.8px;font-size:16px;color:#1e1e1e">-</div></div><svg style="left:1434.5px;top:506.2px" width="15" height="13" viewBox="0 0 15 13"><g fill="#2a5ea8"><rect x="1.5" y="0" width="3" height="3"/><rect x="6" y="0" width="3" height="3"/><rect x="10.5" y="0" width="3" height="3"/></g><path d="M0.8 4.5L7.5 11.5L14.2 4.5" stroke="#2a5ea8" stroke-width="1.4" fill="none"/></svg>
<div class="t" style="left:1240px;top:505.8px;font-size:14px;color:#2c5fae">Střed...</div>
<div class="a" style="left:1211px;top:536.2px;width:22px;height:22px;border:1.5px solid #2a5ea8;background:#ffffe1"></div>
<div class="a" style="left:1294.7px;top:534.23px;width:161.3px;height:28.5px;background:#ffffe1;border:2px solid #2aa9ec"></div><svg style="left:1434.5px;top:542.4px" width="15" height="13" viewBox="0 0 15 13"><g fill="#2a5ea8"><rect x="1.5" y="0" width="3" height="3"/><rect x="6" y="0" width="3" height="3"/><rect x="10.5" y="0" width="3" height="3"/></g><path d="M0.8 4.5L7.5 11.5L14.2 4.5" stroke="#2a5ea8" stroke-width="1.4" fill="none"/></svg>
<div class="t" style="left:1240px;top:542.0px;font-size:14px;color:#2c5fae">Kód ...</div>
<div class="a" style="left:1211px;top:572.5px;width:22px;height:22px;border:1.5px solid #2a5ea8;background:#ffffe1"></div>
<div class="a" style="left:1294.7px;top:570.46px;width:161.3px;height:28.5px;background:#ffffe1;border:2px solid #2aa9ec"></div><svg style="left:1434.5px;top:578.7px" width="15" height="13" viewBox="0 0 15 13"><g fill="#2a5ea8"><rect x="1.5" y="0" width="3" height="3"/><rect x="6" y="0" width="3" height="3"/><rect x="10.5" y="0" width="3" height="3"/></g><path d="M0.8 4.5L7.5 11.5L14.2 4.5" stroke="#2a5ea8" stroke-width="1.4" fill="none"/></svg>
<div class="t" style="left:1240px;top:578.2px;font-size:14px;color:#2c5fae">Kód ...</div>
<div class="a" style="left:1211px;top:608.7px;width:22px;height:22px;border:1.5px solid #2a5ea8;background:#ffffe1"></div>
<div class="a" style="left:1294.7px;top:606.69px;width:161.3px;height:28.5px;background:#ffffe1;border:2px solid #2aa9ec"></div><svg style="left:1434.5px;top:614.9px" width="15" height="13" viewBox="0 0 15 13"><g fill="#2a5ea8"><rect x="1.5" y="0" width="3" height="3"/><rect x="6" y="0" width="3" height="3"/><rect x="10.5" y="0" width="3" height="3"/></g><path d="M0.8 4.5L7.5 11.5L14.2 4.5" stroke="#2a5ea8" stroke-width="1.4" fill="none"/></svg>
<div class="t" style="left:1240px;top:614.4px;font-size:14px;color:#2c5fae">Kód 1</div>
<div class="a" style="left:1211px;top:644.9px;width:22px;height:22px;border:1.5px solid #2a5ea8;background:#ffffe1"></div>
<div class="a" style="left:1294.7px;top:642.92px;width:161.3px;height:28.5px;background:#ffffe1;border:2px solid #2aa9ec"></div><svg style="left:1434.5px;top:651.1px" width="15" height="13" viewBox="0 0 15 13"><g fill="#2a5ea8"><rect x="1.5" y="0" width="3" height="3"/><rect x="6" y="0" width="3" height="3"/><rect x="10.5" y="0" width="3" height="3"/></g><path d="M0.8 4.5L7.5 11.5L14.2 4.5" stroke="#2a5ea8" stroke-width="1.4" fill="none"/></svg>
<div class="t" style="left:1240px;top:650.7px;font-size:14px;color:#2c5fae">Kód 2</div>
<div class="a" style="left:1211px;top:681.1px;width:22px;height:22px;border:1.5px solid #2a5ea8;background:#ffffe1"></div>
<div class="a" style="left:1294.7px;top:679.15px;width:161.3px;height:28.5px;background:#ffffe1;border:2px solid #2aa9ec"></div><svg style="left:1434.5px;top:687.4px" width="15" height="13" viewBox="0 0 15 13"><g fill="#2a5ea8"><rect x="1.5" y="0" width="3" height="3"/><rect x="6" y="0" width="3" height="3"/><rect x="10.5" y="0" width="3" height="3"/></g><path d="M0.8 4.5L7.5 11.5L14.2 4.5" stroke="#2a5ea8" stroke-width="1.4" fill="none"/></svg>
<div class="t" style="left:1240px;top:686.9px;font-size:14px;color:#2c5fae">Kód 3</div>
<div class="a" style="left:1211px;top:717.4px;width:22px;height:22px;border:1.5px solid #2a5ea8;background:#ffffe1"></div>
<div class="a" style="left:1294.7px;top:715.38px;width:161.3px;height:28.5px;background:#ffffe1;border:2px solid #2aa9ec"></div><svg style="left:1434.5px;top:723.6px" width="15" height="13" viewBox="0 0 15 13"><g fill="#2a5ea8"><rect x="1.5" y="0" width="3" height="3"/><rect x="6" y="0" width="3" height="3"/><rect x="10.5" y="0" width="3" height="3"/></g><path d="M0.8 4.5L7.5 11.5L14.2 4.5" stroke="#2a5ea8" stroke-width="1.4" fill="none"/></svg>
<div class="t" style="left:1240px;top:723.1px;font-size:14px;color:#2c5fae">Kód 4</div>
<div class="a" style="left:1211px;top:753.6px;width:22px;height:22px;border:1.5px solid #2a5ea8;background:#ffffe1"></div>
<div class="a" style="left:1294.7px;top:751.61px;width:161.3px;height:28.5px;background:#ffffe1;border:2px solid #2aa9ec"></div><svg style="left:1434.5px;top:759.8px" width="15" height="13" viewBox="0 0 15 13"><g fill="#2a5ea8"><rect x="1.5" y="0" width="3" height="3"/><rect x="6" y="0" width="3" height="3"/><rect x="10.5" y="0" width="3" height="3"/></g><path d="M0.8 4.5L7.5 11.5L14.2 4.5" stroke="#2a5ea8" stroke-width="1.4" fill="none"/></svg>
<div class="t" style="left:1240px;top:759.4px;font-size:14px;color:#2c5fae">Kód 5</div>
<div class="a" style="left:1211px;top:789.8px;width:22px;height:22px;border:1.5px solid #2a5ea8;background:#ffffe1"></div>
<div class="a" style="left:1294.7px;top:787.8399999999999px;width:161.3px;height:28.5px;background:#ffffe1;border:2px solid #2aa9ec"></div><svg style="left:1434.5px;top:796.0px" width="15" height="13" viewBox="0 0 15 13"><g fill="#2a5ea8"><rect x="1.5" y="0" width="3" height="3"/><rect x="6" y="0" width="3" height="3"/><rect x="10.5" y="0" width="3" height="3"/></g><path d="M0.8 4.5L7.5 11.5L14.2 4.5" stroke="#2a5ea8" stroke-width="1.4" fill="none"/></svg>
<div class="t" style="left:1240px;top:795.6px;font-size:14px;color:#2c5fae">Kód 6</div>
<div class="a" style="left:1211px;top:826.1px;width:22px;height:22px;border:1.5px solid #2a5ea8;background:#ffffe1"></div>
<div class="a" style="left:1294.7px;top:824.0699999999999px;width:161.3px;height:28.5px;background:#ffffe1;border:2px solid #2aa9ec"></div><svg style="left:1434.5px;top:832.3px" width="15" height="13" viewBox="0 0 15 13"><g fill="#2a5ea8"><rect x="1.5" y="0" width="3" height="3"/><rect x="6" y="0" width="3" height="3"/><rect x="10.5" y="0" width="3" height="3"/></g><path d="M0.8 4.5L7.5 11.5L14.2 4.5" stroke="#2a5ea8" stroke-width="1.4" fill="none"/></svg>
<div class="t" style="left:1240px;top:831.8px;font-size:14px;color:#2c5fae">Refer...</div>
<div class="a" style="left:1211px;top:862.3px;width:22px;height:22px;border:1.5px solid #2a5ea8;background:#ffffe1"></div>
<div class="a" style="left:1294.7px;top:860.3px;width:161.3px;height:28.5px;background:#ffffe1;border:2px solid #2aa9ec"></div><svg style="left:1434.5px;top:868.5px" width="15" height="13" viewBox="0 0 15 13"><g fill="#2a5ea8"><rect x="1.5" y="0" width="3" height="3"/><rect x="6" y="0" width="3" height="3"/><rect x="10.5" y="0" width="3" height="3"/></g><path d="M0.8 4.5L7.5 11.5L14.2 4.5" stroke="#2a5ea8" stroke-width="1.4" fill="none"/></svg>
<div class="t" style="left:1240px;top:868.0px;font-size:14px;color:#2c5fae">Záka...</div>
<div class="a" style="left:1211px;top:898.5px;width:22px;height:22px;border:1.5px solid #2a5ea8;background:#ffffe1"></div>
<div class="a" style="left:1294.7px;top:896.53px;width:161.3px;height:28.5px;background:#ffffe1;border:2px solid #2aa9ec"></div><svg style="left:1434.5px;top:904.7px" width="15" height="13" viewBox="0 0 15 13"><g fill="#2a5ea8"><rect x="1.5" y="0" width="3" height="3"/><rect x="6" y="0" width="3" height="3"/><rect x="10.5" y="0" width="3" height="3"/></g><path d="M0.8 4.5L7.5 11.5L14.2 4.5" stroke="#2a5ea8" stroke-width="1.4" fill="none"/></svg>
<div class="t" style="left:1240px;top:904.3px;font-size:14px;color:#2c5fae">Prost...</div></body></html>
